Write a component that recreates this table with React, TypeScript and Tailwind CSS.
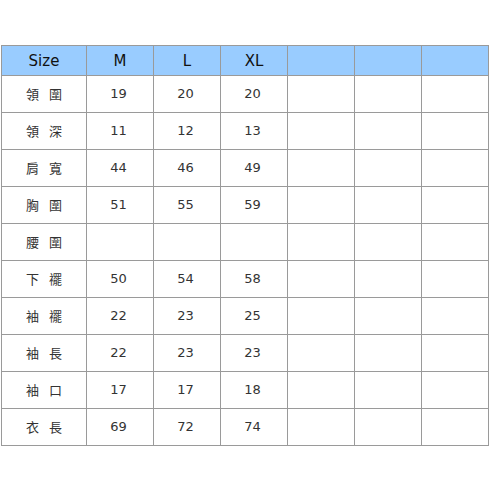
import React from "react";

const rows: [string, string, string, string, string][] = [
  ["領", "圍", "19", "20", "20"],
  ["領", "深", "11", "12", "13"],
  ["肩", "寬", "44", "46", "49"],
  ["胸", "圍", "51", "55", "59"],
  ["腰", "圍", "", "", ""],
  ["下", "襬", "50", "54", "58"],
  ["袖", "襬", "22", "23", "25"],
  ["袖", "長", "22", "23", "23"],
  ["袖", "口", "17", "17", "18"],
  ["衣", "長", "69", "72", "74"],
];

const cell = "border-r border-b border-[#9a9a9a] flex items-center justify-center";

export default function App() {
  return (
    <div className="w-[493px] h-[493px] bg-white pt-[45px] pl-[1px]" style={{ fontFamily: '"DejaVu Sans", Verdana, sans-serif' }}>
      <div className="grid grid-cols-[85px_repeat(6,67px)] grid-rows-[30px_repeat(10,37px)] border-l border-t border-[#9a9a9a] w-fit">
        {["Size", "M", "L", "XL", "", "", ""].map((h, i) => (
          <div key={"h" + i} className={cell + " bg-[#99ccff] text-[15px] text-[#111] pt-[1px]"}>
            {h}
          </div>
        ))}
        {rows.map((r, ri) => (
          <React.Fragment key={ri}>
            <div className={cell + " text-[13px] text-[#333] gap-[10px]"} style={{ fontFamily: '"Noto Sans CJK TC", sans-serif' }}>
              <span>{r[0]}</span>
              <span>{r[1]}</span>
            </div>
            <div className={cell + " text-[13px] text-[#333] pr-[3px]"}>{r[2]}</div>
            <div className={cell + " text-[13px] text-[#333] pr-[3px]"}>{r[3]}</div>
            <div className={cell + " text-[13px] text-[#333] pr-[3px]"}>{r[4]}</div>
            <div className={cell}></div>
            <div className={cell}></div>
            <div className={cell}></div>
          </React.Fragment>
        ))}
      </div>
    </div>
  );
}
